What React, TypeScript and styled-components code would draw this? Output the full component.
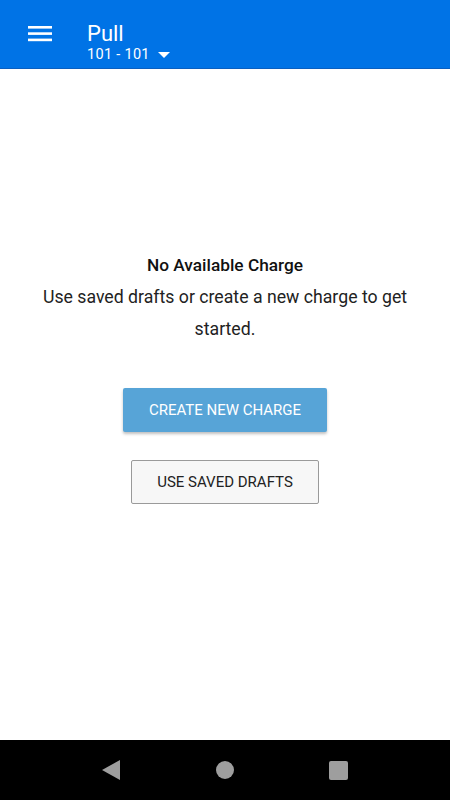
import React from 'react'
import styled, { createGlobalStyle } from 'styled-components'

const GlobalStyle = createGlobalStyle`
  html, body {
    margin: 0;
    padding: 0;
    height: 100%;
  }
  body {
    font-family: Roboto, "Liberation Sans", sans-serif;
    background: #fff;
  }
  #root {
    height: 100%;
  }
`

const Screen = styled.div`
  display: flex;
  flex-direction: column;
  width: 450px;
  height: 800px;
`

const AppBar = styled.header`
  display: flex;
  align-items: center;
  height: 68px;
  background-color: #0073e6;
  border-bottom: 1px solid #0a5fc0;
  box-sizing: content-box;
  color: #fff;
`

const MenuButton = styled.div`
  display: flex;
  width: 24px;
  margin: 0 35px 0 28px;
`

const TitleBlock = styled.div`
  align-self: flex-start;
  display: flex;
  flex-direction: column;
  padding-top: 23px;
`

const Title = styled.div`
  font-size: 22px;
  line-height: 22px;
`

const Subtitle = styled.div`
  display: flex;
  align-items: center;
  gap: 8px;
  margin-top: 3px;
  font-size: 14.5px;
  line-height: 14px;
  letter-spacing: 0.3px;
`

const Main = styled.main`
  flex: 1;
  display: flex;
  flex-direction: column;
  align-items: center;
  padding: 180px 30px 0;
`

const Heading = styled.div`
  font-size: 17.3px;
  font-weight: 500;
  line-height: 32px;
  color: #111;
`

const Message = styled.div`
  font-size: 17.7px;
  line-height: 32px;
  color: #222;
  text-align: center;
`

const Button = styled.button<{ primary?: boolean }>`
  height: 44px;
  margin-top: ${p => (p.primary ? '43px' : '28px')};
  padding: 0 ${p => (p.primary ? '26px' : '25px')};
  font-family: Roboto, "Liberation Sans", sans-serif;
  font-size: 15px;
  text-transform: uppercase;
  border-radius: 2px;
  cursor: pointer;
  color: ${p => (p.primary ? '#fff' : '#222')};
  background-color: ${p => (p.primary ? '#57a4d7' : '#f7f7f7')};
  border: ${p => (p.primary ? 'none' : '1px solid #9a9a9a')};
  box-shadow: ${p => (p.primary ? '0 2px 3px rgba(0,0,0,0.25)' : 'none')};
`

const NavBar = styled.nav`
  display: flex;
  align-items: center;
  justify-content: space-between;
  height: 60px;
  padding: 0 102px;
  background-color: #000;
`

const NavIcon = styled.svg`
  display: block;
`

export default function App() {
  return (
    <Screen>
      <GlobalStyle />
      <AppBar>
        <MenuButton>
          <svg width="24" height="16" viewBox="0 0 24 16">
            <rect x="0" y="0" width="24" height="2.6" fill="#fff" />
            <rect x="0" y="6.3" width="24" height="2.6" fill="#fff" />
            <rect x="0" y="12.6" width="24" height="2.6" fill="#fff" />
          </svg>
        </MenuButton>
        <TitleBlock>
          <Title>Pull</Title>
          <Subtitle>
            101 - 101
            <svg width="12" height="6" viewBox="0 0 12 6">
              <path d="M0 0 L12 0 L6 6 Z" fill="#fff" />
            </svg>
          </Subtitle>
        </TitleBlock>
      </AppBar>
      <Main>
        <Heading>No Available Charge</Heading>
        <Message>Use saved drafts or create a new charge to get started.</Message>
        <Button primary>Create New Charge</Button>
        <Button>Use Saved Drafts</Button>
      </Main>
      <NavBar>
        <NavIcon width="18" height="20" viewBox="0 0 18 20">
          <path d="M18 0 L18 20 L0 10 Z" fill="#9e9e9e" />
        </NavIcon>
        <NavIcon width="18" height="18" viewBox="0 0 18 18">
          <circle cx="9" cy="9" r="9" fill="#9e9e9e" />
        </NavIcon>
        <NavIcon width="19" height="19" viewBox="0 0 19 19">
          <rect x="0" y="0" width="19" height="19" rx="2" fill="#9e9e9e" />
        </NavIcon>
      </NavBar>
    </Screen>
  )
}
